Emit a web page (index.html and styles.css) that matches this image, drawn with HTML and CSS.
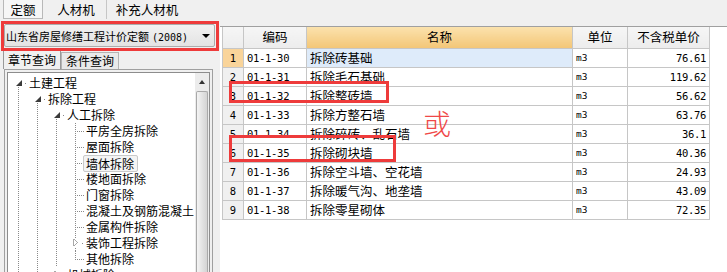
FILE: index.html
```html
<!DOCTYPE html>
<html lang="zh-CN">
<head>
  <meta charset="UTF-8">
  <title>定额查询</title>
  <link rel="stylesheet" href="styles.css">
</head>
<body>
  <div class="app">
    <div class="side">
      <div class="modes">
        <span class="mode active">定额</span>
        <span class="mode">人材机</span>
        <span class="mode wide">补充人材机</span>
      </div>

      <div class="combo">
        <span class="combo-text">山东省房屋修缮工程计价定额<span class="year">(2008)</span></span>
        <span class="combo-arrow"></span>
      </div>

      <div class="subtabs">
        <span class="subtab active">章节查询</span>
        <span class="subtab">条件查询</span>
      </div>

      <div class="panel">
        <div class="tree">
          <div class="nodes">
            <div class="node"><i class="x open"></i><span class="label">土建工程</span></div>
            <div class="node"><i class="g"></i><i class="x open"></i><span class="label">拆除工程</span></div>
            <div class="node"><i class="g"></i><i class="g"></i><i class="x open"></i><span class="label">人工拆除</span></div>
            <div class="node"><i class="g"></i><i class="g"></i><i class="g"></i><i class="t"></i><span class="label">平房全房拆除</span></div>
            <div class="node"><i class="g"></i><i class="g"></i><i class="g"></i><i class="t"></i><span class="label">屋面拆除</span></div>
            <div class="node"><i class="g"></i><i class="g"></i><i class="g"></i><i class="t"></i><span class="label picked">墙体拆除</span></div>
            <div class="node"><i class="g"></i><i class="g"></i><i class="g"></i><i class="t"></i><span class="label">楼地面拆除</span></div>
            <div class="node"><i class="g"></i><i class="g"></i><i class="g"></i><i class="t"></i><span class="label">门窗拆除</span></div>
            <div class="node"><i class="g"></i><i class="g"></i><i class="g"></i><i class="t"></i><span class="label">混凝土及钢筋混凝土</span></div>
            <div class="node"><i class="g"></i><i class="g"></i><i class="g"></i><i class="t"></i><span class="label">金属构件拆除</span></div>
            <div class="node"><i class="g"></i><i class="g"></i><i class="g"></i><i class="x closed thru"></i><span class="label">装饰工程拆除</span></div>
            <div class="node"><i class="g"></i><i class="g"></i><i class="g"></i><i class="l"></i><span class="label">其他拆除</span></div>
            <div class="node"><i class="g"></i><i class="g"></i><i class="x closed"></i><span class="label">机械拆除</span></div>
          </div>
          <div class="vscroll">
            <div class="vscroll-up"></div>
            <div class="vscroll-thumb"></div>
          </div>
        </div>
      </div>
    </div>

    <div class="grid-pane">
      <table class="grid">
        <colgroup>
          <col class="c-no"><col class="c-code"><col class="c-name"><col class="c-unit"><col class="c-price">
        </colgroup>
        <thead>
          <tr>
            <th></th>
            <th>编码</th>
            <th class="sorted">名称</th>
            <th>单位</th>
            <th>不含税单价</th>
          </tr>
        </thead>
        <tbody>
          <tr class="current"><td class="no">1</td><td class="code">01-1-30</td><td class="name">拆除砖基础</td><td class="unit">m3</td><td class="price">76.61</td></tr>
          <tr><td class="no">2</td><td class="code">01-1-31</td><td class="name">拆除毛石基础</td><td class="unit">m3</td><td class="price">119.62</td></tr>
          <tr><td class="no">3</td><td class="code">01-1-32</td><td class="name">拆除整砖墙</td><td class="unit">m3</td><td class="price">56.62</td></tr>
          <tr><td class="no">4</td><td class="code">01-1-33</td><td class="name">拆除方整石墙</td><td class="unit">m3</td><td class="price">63.76</td></tr>
          <tr><td class="no">5</td><td class="code">01-1-34</td><td class="name">拆除碎砖、乱石墙</td><td class="unit">m3</td><td class="price">36.1</td></tr>
          <tr><td class="no">6</td><td class="code">01-1-35</td><td class="name">拆除砌块墙</td><td class="unit">m3</td><td class="price">40.36</td></tr>
          <tr><td class="no">7</td><td class="code">01-1-36</td><td class="name">拆除空斗墙、空花墙</td><td class="unit">m3</td><td class="price">24.93</td></tr>
          <tr><td class="no">8</td><td class="code">01-1-37</td><td class="name">拆除暖气沟、地垄墙</td><td class="unit">m3</td><td class="price">43.09</td></tr>
          <tr><td class="no">9</td><td class="code">01-1-38</td><td class="name">拆除零星砌体</td><td class="unit">m3</td><td class="price">72.35</td></tr>
        </tbody>
      </table>
    </div>
  </div>

  <!-- red annotations drawn over the screenshot -->
  <div class="mark mark-combo"></div>
  <div class="mark mark-row3"></div>
  <div class="mark mark-row6"></div>
  <div class="mark-or">或</div>
</body>
</html>
```

FILE: styles.css
```css
:root {
  --bg: #f0f0f0;
  --line: #c6c6c6;
  --frame: #a0a0a0;
  --dots: #8a8a8a;
  --mark: #ee3b3b;
  --font: "Noto Sans CJK SC", "Noto Sans", sans-serif;
  --mono: "DejaVu Sans Mono", "Liberation Mono", monospace;
}

html, body { margin: 0; }
body {
  position: relative;
  width: 727px;
  height: 272px;
  overflow: hidden;
  background: var(--bg);
  font-family: var(--font);
  font-size: 12px;
  color: #000;
}

.app { display: grid; grid-template-columns: 220px 1fr; height: 100%; }

/* mode tabs */
.modes { display: flex; height: 20px; padding-left: 3px; }
.mode {
  display: flex;
  align-items: center;
  justify-content: center;
  width: 42px;
  height: 19px;
  border-right: 1px solid var(--line);
  font-size: 12.5px;
  line-height: 19px;
}
.mode + .mode { width: 60px; }
.mode.wide { width: 80px; border-right: 0; }
.mode.active {
  width: 38px;
  height: 18px;
  margin-right: 3px;
  border: 1px solid #b8b8b8;
  border-top: 0;
  background: #f6f6f6;
}

/* definition combobox */
.combo {
  display: flex;
  align-items: center;
  height: 23px;
  margin: 4px 5px 0 4px;
  padding-left: 1px;
  border: 1px solid #acacac;
  border-radius: 2px;
  background: linear-gradient(#f2f2f2, #e3e3e3);
  box-sizing: border-box;
}
.combo-text { flex: 1; font-size: 11px; white-space: nowrap; }
.year { margin-left: 3px; font-family: var(--mono); font-size: 10px; }
.combo-arrow {
  width: 0; height: 0;
  margin-right: 4px;
  border-left: 4px solid transparent;
  border-right: 4px solid transparent;
  border-top: 4px solid #000;
}

/* sub tabs */
.subtabs { display: flex; align-items: flex-end; height: 22px; padding-left: 3px; }
.subtab {
  display: flex;
  align-items: center;
  padding: 0 4px;
  height: 16px;
  border: 1px solid #b4b4b4;
  border-bottom: 0;
  background: #e9e9e9;
  font-size: 12px;
  line-height: 16px;
}
.subtab.active { height: 19px; background: var(--bg); border-color: #999; }

/* tree panel */
.panel {
  width: 209px;
  margin-left: 4px;
  padding: 2px;
  border: 1px solid var(--frame);
  border-bottom: 0;
  box-sizing: border-box;
  height: 210px;
}
.tree {
  display: flex;
  height: 100%;
  border: 1px solid #8d8d8d;
  border-bottom: 0;
  background: #fff;
  overflow: hidden;
}
.nodes { flex: 1; padding: 2px 0 0 1px; }
.node { display: flex; height: 16px; white-space: nowrap; }
.node i { flex: none; width: 19px; height: 16px; }
.label { display: flex; align-items: center; height: 16px; padding: 0 1px; line-height: 1; }
.label.picked {
  margin-left: -2px;
  padding: 0 3px 0 2px;
  height: 15px;
  border: 1px solid #c9c9c9;
  border-radius: 2px;
  background: #f4f4f4;
}

/* tree guide lines */
.g {
  background: repeating-linear-gradient(to bottom, var(--dots) 0 1px, transparent 1px 2px) 9px 0 / 1px 100% no-repeat;
}
.t {
  background:
    repeating-linear-gradient(to bottom, var(--dots) 0 1px, transparent 1px 2px) 9px 0 / 1px 100% no-repeat,
    repeating-linear-gradient(to right, var(--dots) 0 1px, transparent 1px 2px) 11px 8px / 8px 1px no-repeat;
}
.l {
  background:
    repeating-linear-gradient(to bottom, var(--dots) 0 1px, transparent 1px 2px) 9px 0 / 1px 9px no-repeat,
    repeating-linear-gradient(to right, var(--dots) 0 1px, transparent 1px 2px) 11px 8px / 8px 1px no-repeat;
}
.x {
  background:
    repeating-linear-gradient(to bottom, var(--dots) 0 1px, transparent 1px 2px) 9px 12px / 1px 4px no-repeat,
    linear-gradient(var(--dots), var(--dots)) 16px 8px / 1px 1px no-repeat;
}
.x.thru {
  background:
    repeating-linear-gradient(to bottom, var(--dots) 0 1px, transparent 1px 2px) 9px 0 / 1px 3px no-repeat,
    repeating-linear-gradient(to bottom, var(--dots) 0 1px, transparent 1px 2px) 9px 13px / 1px 3px no-repeat,
    linear-gradient(var(--dots), var(--dots)) 16px 8px / 1px 1px no-repeat;
}
.x::before { content: ""; display: block; width: 0; height: 0; }
.x.open::before {
  margin: 5px 0 0 7px;
  border-left: 6px solid transparent;
  border-bottom: 6px solid #3a3a3a;
}
.x.closed::before {
  width: 4px;
  height: 7px;
  margin: 4px 0 0 7px;
  background:
    linear-gradient(to top right, transparent 45%, #a8a8a8 46% 58%, transparent 59%) 0 0 / 4px 4px no-repeat,
    linear-gradient(to bottom right, transparent 45%, #a8a8a8 46% 58%, transparent 59%) 0 3px / 4px 4px no-repeat;
  border-left: 1px solid #a8a8a8;
}

/* scrollbar */
.vscroll { display: flex; flex-direction: column; width: 16px; background: #ececec; }
.vscroll-up {
  display: flex;
  justify-content: center;
  align-items: center;
  height: 17px;
}
.vscroll-up::before {
  content: "";
  border-left: 3px solid transparent;
  border-right: 3px solid transparent;
  border-bottom: 4px solid #333;
}
.vscroll-thumb {
  flex: 1;
  margin: 1px 1px 0;
  border: 1px solid #a9a9a9;
  border-bottom: 0;
  border-radius: 2px 2px 0 0;
  background: linear-gradient(to right, #f4f4f4, #e0e0e0 60%, #d4d4d4);
}

/* data grid */
.grid-pane {
  margin-top: 26px;
  padding-left: 2px;
  border-top: 1px solid var(--frame);
  background: #fff;
}
.grid { border-collapse: collapse; table-layout: fixed; width: 487px; }
.c-no { width: 21px; }
.c-code { width: 63px; }
.c-name { width: 266px; }
.c-unit { width: 55px; }
.c-price { width: 82px; }
.grid th, .grid td {
  border: 1px solid var(--line);
  padding: 0 3px;
  white-space: nowrap;
  overflow: hidden;
  line-height: 16px;
}
.grid thead tr { height: 21px; }
.grid tbody tr { height: 19px; }
.grid th {
  font-weight: normal;
  font-size: 12.5px;
  background: linear-gradient(#f6f6f6, #ececec);
  border-top: 0;
}
.grid th.sorted { background: linear-gradient(#fbe2ad, #f3c677); }
.grid td.no {
  padding: 0;
  text-align: center;
  background: var(--bg);
  font-family: var(--mono);
  font-size: 10.5px;
}
.grid tr.current td.no { background: #f9d49a; }
.grid tr.current td.name { background: #deebfa; }
.code, .price { font-family: var(--mono); font-size: 10.5px; letter-spacing: -0.3px; }
.price { text-align: right; }
.name { font-size: 12.5px; }
.unit { font-family: var(--mono); font-size: 9.5px; }

/* annotations */
.mark {
  position: absolute;
  box-sizing: border-box;
  border: 3px solid var(--mark);
}
.mark-combo { left: 1px; top: 21px; width: 218px; height: 30px; }
.mark-row3 { left: 229px; top: 81px; width: 160px; height: 22px; }
.mark-row6 { left: 229px; top: 135px; width: 167px; height: 27px; }
.mark-or {
  position: absolute;
  left: 423px;
  top: 108px;
  font-size: 28px;
  font-weight: 300;
  line-height: 1.1;
  color: #f04848;
}
```
